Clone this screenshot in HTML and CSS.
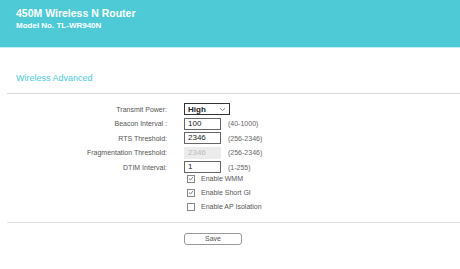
FILE: index.html
```html
<!DOCTYPE html>
<html>
<head>
<meta charset="utf-8">
<link rel="stylesheet" href="styles.css">
</head>
<body>
<header class="top">
  <div class="title">450M Wireless N Router</div>
  <div class="model">Model No. TL-WR940N</div>
</header>
<main class="content">
  <h2 class="section-title">Wireless Advanced</h2>
  <div class="form">
    <div class="row">
      <label class="lbl">Transmit Power:</label>
      <div class="ctl">
        <div class="select"><span>High</span>
          <svg class="chev" width="7" height="5" viewBox="0 0 7 5"><path d="M1 1.2 L3.5 3.6 L6 1.2" fill="none" stroke="#777" stroke-width="0.9"/></svg>
        </div>
      </div>
    </div>
    <div class="row">
      <label class="lbl">Beacon Interval :</label>
      <div class="ctl"><span class="field">100</span><span class="hint">(40-1000)</span></div>
    </div>
    <div class="row">
      <label class="lbl">RTS Threshold:</label>
      <div class="ctl"><span class="field">2346</span><span class="hint">(256-2346)</span></div>
    </div>
    <div class="row">
      <label class="lbl">Fragmentation Threshold:</label>
      <div class="ctl"><span class="field disabled">2346</span><span class="hint">(256-2346)</span></div>
    </div>
    <div class="row">
      <label class="lbl">DTIM Interval:</label>
      <div class="ctl"><span class="field">1</span><span class="hint">(1-255)</span></div>
    </div>
    <div class="checks">
      <div class="row check-row">
        <span class="lbl"></span>
        <div class="ctl check">
          <span class="box"><svg width="7" height="7" viewBox="0 0 7 7"><path d="M1.2 3.6 L2.9 5.3 L5.9 1.6" fill="none" stroke="#555" stroke-width="0.9"/></svg></span>
          <span class="ctext">Enable WMM</span>
        </div>
      </div>
      <div class="row check-row">
        <span class="lbl"></span>
        <div class="ctl check">
          <span class="box"><svg width="7" height="7" viewBox="0 0 7 7"><path d="M1.2 3.6 L2.9 5.3 L5.9 1.6" fill="none" stroke="#555" stroke-width="0.9"/></svg></span>
          <span class="ctext">Enable Short GI</span>
        </div>
      </div>
      <div class="row check-row">
        <span class="lbl"></span>
        <div class="ctl check">
          <span class="box"></span>
          <span class="ctext">Enable AP Isolation</span>
        </div>
      </div>
    </div>
  </div>
  <div class="actions">
    <button class="save">Save</button>
  </div>
</main>
</body>
</html>
```
FILE: styles.css
```css
* { box-sizing: border-box; }
html, body { margin: 0; padding: 0; background: #fff; }
body { font-family: "Liberation Sans", Arial, sans-serif; color: #555; width: 460px; height: 269px; overflow: hidden; }

.top {
  height: 48px;
  background: #4ecad6;
  border-bottom: 1px solid #c4eff3;
  padding: 7px 0 0 16px;
  color: #fff;
  font-weight: bold;
}
.title { font-size: 10.5px; line-height: 12px; }
.model { font-size: 8px; line-height: 10px; margin-top: 2px; }

.content { margin-left: 7px; }
.section-title {
  margin: 0;
  padding: 24px 0 0 9px;
  font-size: 9px;
  line-height: 12px;
  font-weight: normal;
  color: #4ecad6;
  height: 46px;
  border-bottom: 1px solid #d8d8d8;
}

.form { padding-top: 8px; padding-bottom: 8px; border-bottom: 1px solid #e2e2e2; }
.row {
  display: grid;
  grid-template-columns: 160px 1fr;
  column-gap: 17px;
  align-items: center;
  height: 14.5px;
  font-size: 7px;
}
.lbl { text-align: right; color: #555; white-space: nowrap; }
.ctl { display: flex; align-items: center; gap: 7px; }

.select {
  width: 46px;
  height: 12px;
  border: 1px solid #333;
  display: flex;
  align-items: center;
  justify-content: space-between;
  padding: 0 3px 0 3px;
  font-size: 8px;
  color: #222;
  font-weight: bold;
}
.field {
  width: 37px;
  height: 12px;
  border: 1px solid #666;
  font-size: 8px;
  line-height: 10px;
  padding-left: 3px;
  color: #222;
}
.field.disabled { background: #ececec; border-color: #ececec; color: #bbb; }
.hint { color: #666; }

.checks { margin-top: -3px; }
.check-row { height: 14px; }
.check { gap: 6px; padding-left: 3px; }
.box {
  width: 8px;
  height: 8px;
  border: 1px solid #888;
  display: flex;
  align-items: center;
  justify-content: center;
}
.ctext { color: #555; }

.actions { display: flex; padding: 10px 0 0 177px; }
.save {
  width: 58px;
  height: 12px;
  border: 1px solid #999;
  border-radius: 3px;
  background: #fff;
  font-family: "Liberation Sans", Arial, sans-serif;
  font-size: 7px;
  color: #555;
  padding: 0;
  line-height: 10px;
}
```
